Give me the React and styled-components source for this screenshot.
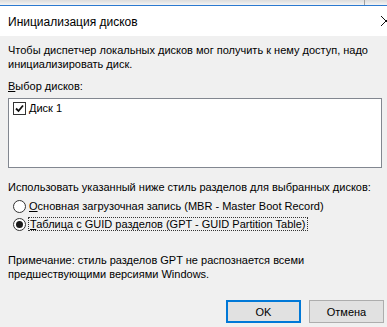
import styled, { createGlobalStyle } from 'styled-components';

const Global = createGlobalStyle`
  html, body { margin: 0; padding: 0; background: #f0f0f0; }
  body { font-family: "Liberation Sans", Arial, sans-serif; font-size: 11px; color: #000; }
`;

const Screen = styled.div`
  width: 387px;
  height: 327px;
  overflow: hidden;
  display: flex;
  flex-direction: column;
`;

const BackStrip = styled.div`
  height: 5px;
  background: linear-gradient(#dcdcdc, #f4f4f4);
  border-bottom: 1px solid #2b79d0;
  display: flex;
  justify-content: flex-end;
  flex-shrink: 0;
`;

const Divider = styled.span`
  width: 1px;
  margin-right: 22px;
  background: #a0a0a0;
`;

const TitleBar = styled.div`
  height: 30px;
  background: #fff;
  display: flex;
  align-items: center;
  justify-content: space-between;
  padding-left: 8px;
  flex-shrink: 0;
`;

const Title = styled.span`
  font-size: 12px;
  padding-top: 2px;
`;

const Close = styled.svg`
  margin-right: -5px;
`;

const Body = styled.div`
  flex: 1;
  background: #f0f0f0;
  padding: 7px 5px 0 8px;
  display: flex;
  flex-direction: column;
`;

const Text = styled.p`
  margin: ${(p) => p.$mt || 0}px 0 0;
  line-height: 14px;
  white-space: pre;
`;

const Key = styled.span`
  text-decoration: underline;
`;

const ListBox = styled.div`
  box-sizing: border-box;
  margin-top: 5px;
  height: 70px;
  background: #fff;
  border: 1px solid #828790;
  padding: 1px 4px;
`;

const Row = styled.label`
  display: flex;
  align-items: center;
  gap: 3px;
  height: ${(p) => p.$h || 18}px;
  padding-left: ${(p) => p.$pl || 0}px;
  white-space: nowrap;
`;

const Box = styled.span`
  width: 11px;
  height: 11px;
  border: 1px solid #333;
  background: #fff;
  display: flex;
  align-items: center;
  justify-content: center;
`;

const Radio = styled.span`
  width: 11px;
  height: 11px;
  border: 1px solid #333;
  border-radius: 50%;
  background: #fff;
  display: flex;
  align-items: center;
  justify-content: center;
  &::after {
    content: '';
    width: 7px;
    height: 7px;
    border-radius: 50%;
    background: ${(p) => (p.$on ? '#1a1a1a' : 'transparent')};
  }
`;

const Focus = styled.span`
  outline: 1px dotted #333;
  padding: 0 1px;
`;

const Buttons = styled.div`
  margin-top: auto;
  margin-bottom: 4px;
  display: flex;
  justify-content: flex-end;
  gap: 8px;
  margin-right: -2px;
`;

const Button = styled.button`
  box-sizing: border-box;
  width: 75px;
  height: 23px;
  font-family: inherit;
  font-size: 11px;
  background: #e1e1e1;
  border: ${(p) => (p.$default ? '2px solid #0078d7' : '1px solid #adadad')};
  padding: 0;
  color: #000;
`;

export default function App() {
  return (
    <Screen>
      <Global />
      <BackStrip>
        <Divider />
      </BackStrip>
      <TitleBar>
        <Title>Инициализация дисков</Title>
        <Close width="12" height="12" viewBox="0 0 12 12">
          <path d="M1 1 L11 11 M11 1 L1 11" stroke="#111" strokeWidth="1" />
        </Close>
      </TitleBar>
      <Body>
        <Text>
          {'Чтобы диспетчер локальных дисков мог получить к нему доступ, надо\nинициализировать диск.'}
        </Text>
        <Text $mt={8}>
          <Key>В</Key>ыбор дисков:
        </Text>
        <ListBox>
          <Row $h={16}>
            <Box>
              <svg width="9" height="9" viewBox="0 0 9 9">
                <path d="M1 4.5 L3.5 7 L8 1.5" fill="none" stroke="#111" strokeWidth="1.8" />
              </svg>
            </Box>
            <span>Диск 1</span>
          </Row>
        </ListBox>
        <Text $mt={12}>Использовать указанный ниже стиль разделов для выбранных дисков:</Text>
        <Row $pl={5} $h={18} style={{ marginTop: 3 }}>
          <Radio />
          <span>
            <Key>О</Key>сновная загрузочная запись (MBR - Master Boot Record)
          </span>
        </Row>
        <Row $pl={5} $h={18}>
          <Radio $on />
          <Focus>
            <Key>Т</Key>аблица с GUID разделов (GPT - GUID Partition Table)
          </Focus>
        </Row>
        <Text $mt={20}>
          {'Примечание: стиль разделов GPT не распознается всеми\nпредшествующими версиями Windows.'}
        </Text>
        <Buttons>
          <Button $default>OK</Button>
          <Button>Отмена</Button>
        </Buttons>
      </Body>
    </Screen>
  );
}
